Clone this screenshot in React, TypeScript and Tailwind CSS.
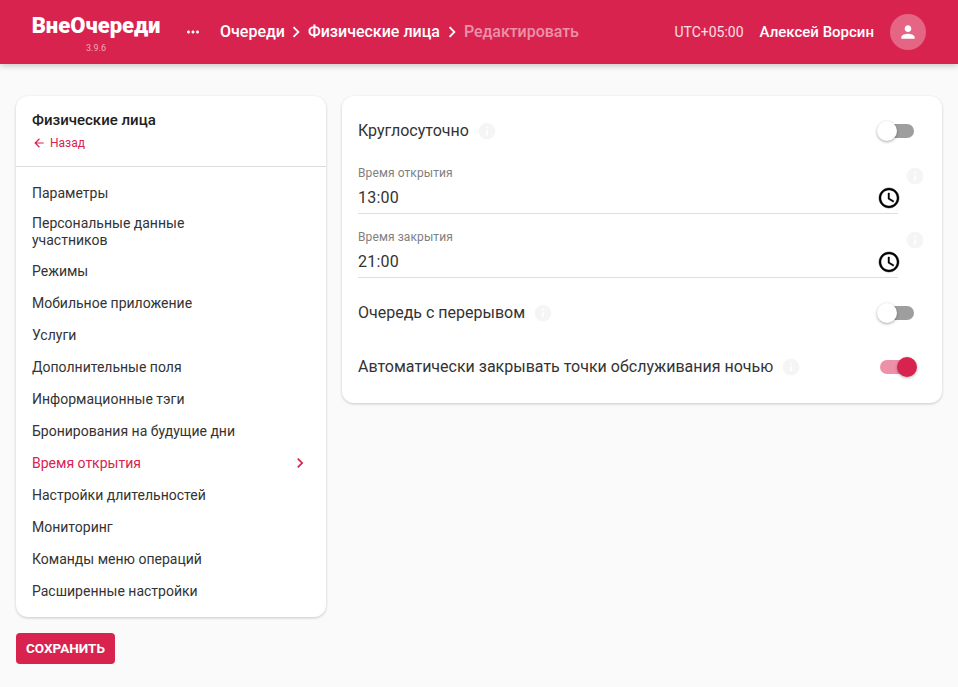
const Icon = ({ d, className }: { d: string; className?: string }) => (
  <svg viewBox="0 0 24 24" fill="currentColor" className={className}>
    <path d={d} />
  </svg>
);

const chevron = "M10 6L8.59 7.41 13.17 12l-4.58 4.59L10 18l6-6z";
const info = "M12 2C6.48 2 2 6.48 2 12s4.48 10 10 10 10-4.48 10-10S17.52 2 12 2zm1 15h-2v-6h2v6zm0-8h-2V7h2v2z";
const clock = "M11.99 2C6.47 2 2 6.48 2 12s4.47 10 9.99 10C17.52 22 22 17.52 22 12S17.52 2 11.99 2zM12 20c-4.42 0-8-3.58-8-8s3.58-8 8-8 8 3.58 8 8-3.58 8-8 8zm.5-13H11v6l5.25 3.15.75-1.23-4.5-2.67z";
const person = "M12 12c2.21 0 4-1.79 4-4s-1.79-4-4-4-4 1.79-4 4 1.79 4 4 4zm0 2c-2.67 0-8 1.34-8 4v2h16v-2c0-2.66-5.33-4-8-4z";
const more = "M6 10c-1.1 0-2 .9-2 2s.9 2 2 2 2-.9 2-2-.9-2-2-2zm12 0c-1.1 0-2 .9-2 2s.9 2 2 2 2-.9 2-2-.9-2-2-2zm-6 0c-1.1 0-2 .9-2 2s.9 2 2 2 2-.9 2-2-.9-2-2-2z";
const back = "M20 11H7.83l5.59-5.59L12 4l-8 8 8 8 1.41-1.41L7.83 13H20v-2z";

const menu = [
  "Параметры",
  "Персональные данные участников",
  "Режимы",
  "Мобильное приложение",
  "Услуги",
  "Дополнительные поля",
  "Информационные тэги",
  "Бронирования на будущие дни",
  "Время открытия",
  "Настройки длительностей",
  "Мониторинг",
  "Команды меню операций",
  "Расширенные настройки",
];

const Toggle = ({ on }: { on?: boolean }) => (
  <div className="relative h-[14px] w-[34px]">
    <div className={on ? "h-full rounded-full bg-[#ee91a8]" : "h-full rounded-full bg-[#9e9e9e]"} />
    <div
      className={
        on
          ? "absolute top-[-3px] right-[-3px] h-5 w-5 rounded-full bg-[#d9234f] shadow-[0_1px_3px_rgba(0,0,0,0.3)]"
          : "absolute top-[-3px] left-[-3px] h-5 w-5 rounded-full bg-white shadow-[0_1px_3px_rgba(0,0,0,0.35)]"
      }
    />
  </div>
);

const SwitchRow = ({ label, on, height }: { label: string; on?: boolean; height: string }) => (
  <div className={`flex items-center justify-between pr-3 ${height}`}>
    <div className="flex items-center gap-2">
      <span className="text-base text-[#333333]">{label}</span>
      <Icon d={info} className="h-5 w-5 text-[#f5f5f5]" />
    </div>
    <Toggle on={on} />
  </div>
);

const TimeField = ({ label, value }: { label: string; value: string }) => (
  <div className="flex h-[64px] items-start">
    <div className="relative h-[58px] w-[540px] border-b border-[#dedede]">
      <div className="pt-[10px] text-xs leading-[14px] tracking-[0.1px] text-[#808080]">{label}</div>
      <div className="mt-[8px] text-base leading-[20px] tracking-[0.2px] text-[#333333]">{value}</div>
      <Icon d={clock} className="absolute top-[30px] right-[-3px] h-6 w-6 stroke-black stroke-[0.4] text-black" />
    </div>
    <Icon d={info} className="mt-[10px] ml-[7px] h-5 w-5 text-[#f5f5f5]" />
  </div>
);

export default function App() {
  return (
    <div className="flex min-h-screen flex-col bg-[#fafafa] font-['Roboto',sans-serif]">
      <header className="flex h-16 items-center bg-[#d9234f] pr-8 pl-8 text-white shadow-[0_2px_6px_rgba(0,0,0,0.2)]">
        <div className="flex w-[128px] flex-col items-center pt-[2px]">
          <div className="text-[22px] leading-[26px] font-black">ВнеОчереди</div>
          <div className="mt-[3px] text-[9px] leading-[12px] text-white/60">3.9.6</div>
        </div>
        <Icon d={more} className="ml-[24px] h-[18px] w-[18px]" />
        <nav className="ml-[18px] flex items-center text-base font-medium">
          <span>Очереди</span>
          <Icon d={chevron} className="mx-[0.5px] h-[22px] w-[22px]" />
          <span>Физические лица</span>
          <Icon d={chevron} className="mx-[1px] h-[22px] w-[22px]" />
          <span className="tracking-[-0.05px] text-white/50">Редактировать</span>
        </nav>
        <div className="ml-auto flex items-center">
          <span className="text-sm text-white/85">UTC+05:00</span>
          <span className="ml-4 text-[15px] font-medium">Алексей Ворсин</span>
          <div className="ml-4 flex h-9 w-9 items-center justify-center rounded-full bg-white/30">
            <Icon d={person} className="h-5 w-5" />
          </div>
        </div>
      </header>

      <main className="flex items-start gap-4 px-4 pt-8">
        <div className="w-[310px] shrink-0">
          <div className="rounded-xl bg-white shadow-[0_1px_3px_rgba(0,0,0,0.2)]">
            <div className="h-[71px] border-b border-[#dedede] pt-[15px] pl-4">
              <div className="text-[15px] leading-[18px] font-medium text-[#212121]">Физические лица</div>
              <div className="mt-[6px] flex items-center gap-[4px] text-xs leading-[16px] text-[#d9234f]">
                <Icon d={back} className="h-[14px] w-[14px]" />
                Назад
              </div>
            </div>
            <div className="py-[10px]">
              {menu.map((item) => {
                const active = item === "Время открытия";
                return (
                  <div
                    key={item}
                    className={
                      active
                        ? "flex min-h-8 items-center justify-between pr-4 pl-4 text-sm leading-[17px] text-[#d9234f]"
                        : "flex min-h-8 items-center justify-between pr-4 pl-4 text-sm leading-[17px] text-[#333333]"
                    }
                  >
                    <span className={item.length > 28 ? "w-[190px] py-[6px]" : ""}>{item}</span>
                    {active && <Icon d={chevron} className="h-5 w-5" />}
                  </div>
                );
              })}
            </div>
          </div>
          <button className="mt-4 h-[31px] w-[99px] rounded bg-[#d9234f] pb-[1px] text-[13.5px] font-bold text-white">
            СОХРАНИТЬ
          </button>
        </div>

        <div className="h-[307px] flex-1 rounded-xl bg-white px-4 pt-[10px] shadow-[0_1px_3px_rgba(0,0,0,0.2)]">
          <SwitchRow label="Круглосуточно" height="h-[50px]" />
          <TimeField label="Время открытия" value="13:00" />
          <TimeField label="Время закрытия" value="21:00" />
          <SwitchRow label="Очередь с перерывом" height="h-[58px]" />
          <SwitchRow label="Автоматически закрывать точки обслуживания ночью" on height="h-[50px]" />
        </div>
      </main>
    </div>
  );
}
